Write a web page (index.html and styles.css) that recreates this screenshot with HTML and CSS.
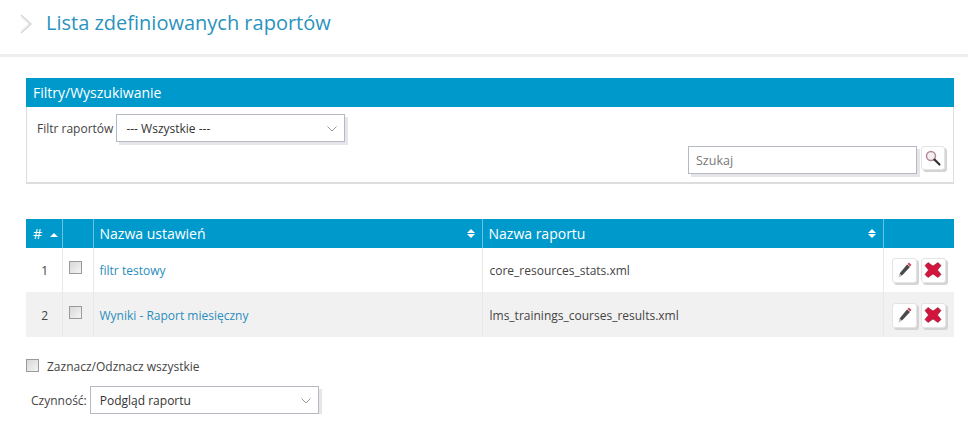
FILE: index.html
```html
<!DOCTYPE html>
<html>
  <head>
    <meta charset="utf-8">
    <title>Lista zdefiniowanych raportów</title>
    <link rel="stylesheet" href="styles.css">
  </head>
<body>

<div class="page-head">
  <svg class="head-arrow" width="14" height="20" viewBox="0 0 14 20"><path d="M1 1l10 9-10 9" fill="none" stroke="#d6d6d6" stroke-width="1.5"/><path d="M1 3l8 7-8 7" fill="none" stroke="#e8e8e8" stroke-width="1"/></svg>
  <h1>Lista zdefiniowanych raportów</h1>
</div>

<div class="content">

  <div class="panel">
    <div class="panel-title">Filtry/Wyszukiwanie</div>
    <div class="panel-body">
      <div class="filter-row">
        <label>Filtr raportów</label>
        <div class="select">--- Wszystkie ---
          <svg class="chevron" width="10" height="6" viewBox="0 0 10 6"><path d="M.5.5L5 5 9.500.5" fill="none" stroke="#999" stroke-width="1"/></svg>
        </div>
      </div>
      <div class="search-row">
        <input class="search" type="text" placeholder="Szukaj">
        <div class="icon-btn search-btn">
          <svg width="18" height="18" viewBox="0 0 18 18"><circle cx="7" cy="7" r="4.500" fill="#f4eef0" stroke="#b58a98" stroke-width="1.500"/><path d="M10.500 10.500L15.500 15.500" stroke="#333" stroke-width="2.200" stroke-linecap="round"/></svg>
        </div>
      </div>
    </div>
  </div>

  <table class="reports">
    <thead>
      <tr>
        <th class="col-num"># <span class="sort-up"></span></th>
        <th class="col-check"></th>
        <th class="col-name">Nazwa ustawień<span class="sort-both"></span></th>
        <th class="col-file">Nazwa raportu<span class="sort-both"></span></th>
        <th class="col-actions"></th>
      </tr>
    </thead>
    <tbody>
      <tr>
        <td class="num">1</td>
        <td class="check"><span class="checkbox"></span></td>
        <td><a href="#">filtr testowy</a></td>
        <td class="file">core_resources_stats.xml</td>
        <td class="actions">
          <div class="icon-btn"><svg width="16" height="18" viewBox="0 0 16 18"><path d="M11 3.500l3 2.500-7.500 8-3.500 2 1-4z" fill="#4a4a4a"/><path d="M11.500 3l1.500-1.500 2.500 2.500-1.500 1.500z" fill="#d2405f"/><path d="M3.500 12.500l2.500 2-3.500 2z" fill="#c4c4c4"/></svg></div>
          <div class="icon-btn"><svg width="18" height="18" viewBox="0 0 18 18"><path d="M4 1.500l5 3.500 5-3.500 3 3-3.500 4.500 3.500 4.500-3 3-5-3.500-5 3.500-3-3 3.500-4.500-3.500-4.500z" fill="#d3143c" stroke="#8d1a30" stroke-width=".6"/></svg></div>
        </td>
      </tr>
      <tr class="even">
        <td class="num">2</td>
        <td class="check"><span class="checkbox"></span></td>
        <td><a href="#">Wyniki - Raport miesięczny</a></td>
        <td class="file">lms_trainings_courses_results.xml</td>
        <td class="actions">
          <div class="icon-btn"><svg width="16" height="18" viewBox="0 0 16 18"><path d="M11 3.500l3 2.500-7.500 8-3.500 2 1-4z" fill="#4a4a4a"/><path d="M11.500 3l1.500-1.500 2.500 2.500-1.500 1.500z" fill="#d2405f"/><path d="M3.500 12.500l2.500 2-3.500 2z" fill="#c4c4c4"/></svg></div>
          <div class="icon-btn"><svg width="18" height="18" viewBox="0 0 18 18"><path d="M4 1.500l5 3.500 5-3.500 3 3-3.500 4.500 3.500 4.500-3 3-5-3.500-5 3.500-3-3 3.500-4.500-3.500-4.500z" fill="#d3143c" stroke="#8d1a30" stroke-width=".6"/></svg></div>
        </td>
      </tr>
    </tbody>
  </table>

  <div class="select-all">
    <span class="checkbox"></span>
    <label>Zaznacz/Odznacz wszystkie</label>
  </div>

  <div class="action-row">
    <label>Czynność:</label>
    <div class="select">Podgląd raportu
      <svg class="chevron" width="10" height="6" viewBox="0 0 10 6"><path d="M.5.5L5 5 9.500.5" fill="none" stroke="#999" stroke-width="1"/></svg>
    </div>
  </div>

</div>

</body></html>
```

FILE: styles.css
```css
body {
  font-family: "Open Sans", sans-serif;
  font-size: 12px;
  color: #444;
  margin: 0;
  background: #fff;
}

.page-head {
  display: flex;
  align-items: center;
  height: 44px;
  padding-left: 20px;
  padding-bottom: 10px;
  border-bottom: 3px solid #eee;
}

.head-arrow {
  margin-right: 12px;
  margin-top: 3px;
}

h1 {
  font-size: 20px;
  font-weight: 400;
  color: #2a93bd;
  margin: 0;
}

.content {
  padding: 21px 14px 0 26px;
}

.panel {
  border: 1px solid #ddd;
  border-top: none;
  border-bottom: 2px solid #ddd;
  height: 106px;
  box-sizing: border-box;
}

.panel-title {
  background: #0099cc;
  color: #fff;
  font-size: 14px;
  height: 29px;
  line-height: 29px;
  padding-left: 7px;
  margin: 0 -1px;
}

.panel-body {
  padding: 7px 6px 0 10px;
}

.filter-row {
  display: flex;
  align-items: center;
  gap: 3px;
}

.select {
  position: relative;
  width: 229px;
  height: 28px;
  line-height: 27px;
  background: #fff;
  border: 1px solid #b5b9c4;
  box-shadow: 3px 3px 0 #e6e6ea;
  color: #333;
  box-sizing: border-box;
  padding-left: 9px;
}

.chevron {
  position: absolute;
  right: 7px;
  top: 11px;
}

.search-row {
  display: flex;
  justify-content: flex-end;
  gap: 4px;
  margin-top: 4px;
  margin-right: 2px;
}

.search {
  width: 229px;
  height: 28px;
  box-sizing: border-box;
  border: 1px solid #b5b9c4;
  box-shadow: 3px 3px 0 #e6e6ea;
  padding: 0 7px;
  font-family: "Open Sans", sans-serif;
  font-size: 12.500px;
  outline: none;
}

.search::placeholder {
  color: #777;
}

.icon-btn {
  display: inline-flex;
  align-items: center;
  justify-content: center;
  background: #fff;
  border: 1px solid #e4e4e4;
  border-radius: 3px;
  box-shadow: 2px 2px 0 #d4d4d4;
  box-sizing: border-box;
  vertical-align: middle;
}

.search-btn {
  width: 24px;
  height: 24px;
}

table.reports {
  width: 100%;
  margin-top: 35px;
  border-collapse: collapse;
  table-layout: fixed;
}

.reports th {
  background: #0099cc;
  color: #fff;
  font-size: 14px;
  font-weight: 400;
  text-align: left;
  height: 29px;
  padding: 0 6px;
  border-left: 1px solid #6fc1dd;
  box-sizing: border-box;
  position: relative;
  white-space: nowrap;
}

.reports th:first-child {
  border-left: none;
}

.reports td {
  height: 44px;
  padding: 0 6px;
  border-left: 1px solid #e8e8e8;
  box-sizing: border-box;
}

.reports td:first-child {
  border-left: none;
}

.reports tr.even td {
  background: #f1f1f1;
  height: 45px;
  padding-top: 1px;
}

.col-num { width: 36px; }
.col-check { width: 31px; }
.col-name { width: 389px; }
.col-file { width: 401px; }

.reports th.col-num {
  padding-left: 7px;
}

.reports td.num {
  text-align: center;
  padding-left: 2px;
  padding-right: 0;
}

.reports td.check,
.reports tr.even td.check {
  vertical-align: top;
  padding-top: 13px;
}

.reports tr.even td.check {
  padding-top: 14px;
}

.reports td.file {
  padding-left: 7px;
}

.check .checkbox {
  display: block;
}

a {
  color: #2a8dbd;
  text-decoration: none;
}

.checkbox {
  display: inline-block;
  width: 13px;
  height: 13px;
  border: 1px solid #9a9a9a;
  background: linear-gradient(135deg, #d8d8d8, #f4f4f4);
  box-sizing: border-box;
}

.reports td.actions {
  padding-left: 8px;
  padding-right: 0;
  white-space: nowrap;
}

.actions .icon-btn {
  width: 25px;
  height: 25px;
  margin-right: 1px;
}

.sort-up {
  display: inline-block;
  width: 0;
  height: 0;
  margin-left: 4px;
  border: 4px solid transparent;
  border-top: none;
  border-bottom: 4px solid #fff;
  vertical-align: 2px;
}

.sort-both {
  position: absolute;
  right: 7px;
  top: 10px;
  width: 0;
  height: 0;
  border: 4px solid transparent;
  border-top: none;
  border-bottom: 4px solid #fff;
}

.sort-both::after {
  content: "";
  position: absolute;
  left: -4px;
  top: 5px;
  border: 4px solid transparent;
  border-bottom: none;
  border-top: 4px solid #fff;
}

.select-all {
  display: flex;
  align-items: center;
  gap: 8px;
  margin-top: 21px;
  height: 16px;
}

.select-all .checkbox {
  margin-top: -2px;
}

.action-row {
  display: flex;
  align-items: center;
  gap: 3px;
  margin-top: 12px;
  padding-left: 5px;
}
```
